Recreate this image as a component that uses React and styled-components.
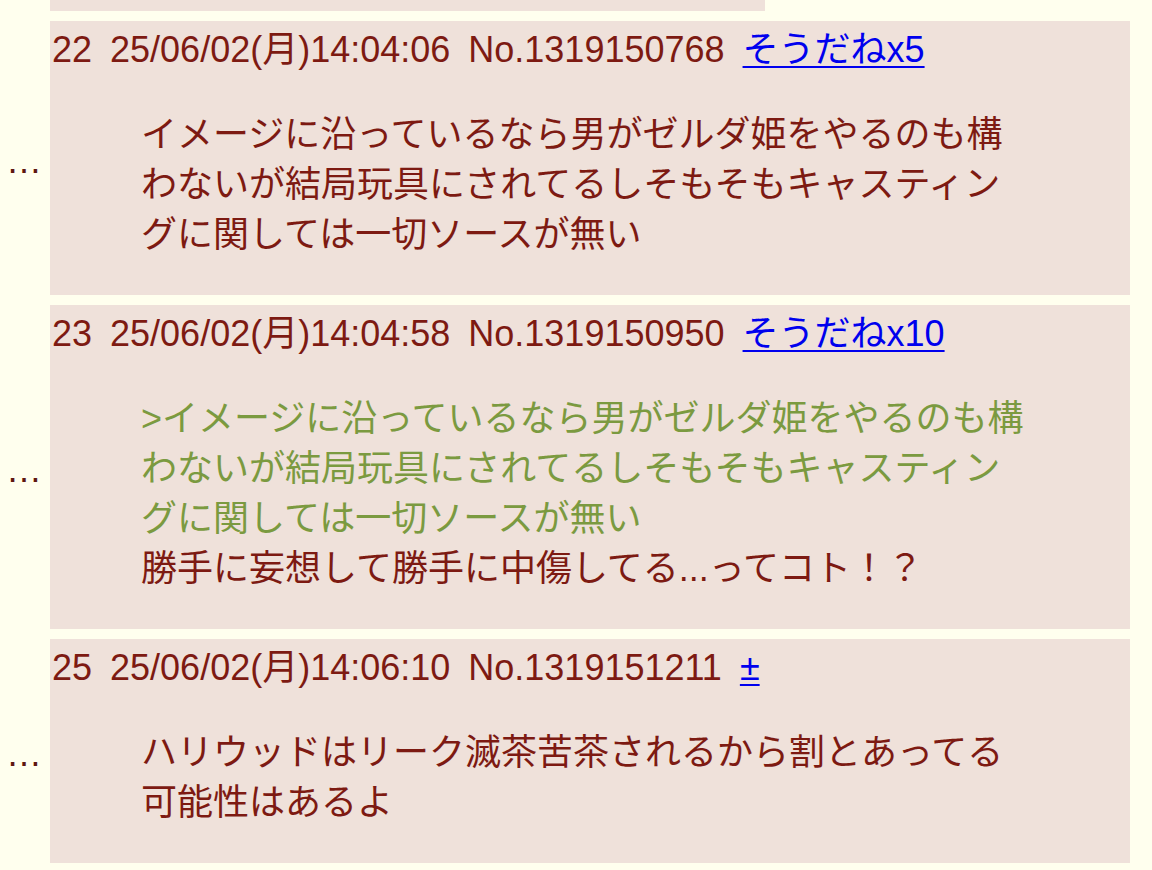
import React from 'react';
import styled, { createGlobalStyle } from 'styled-components';

const GlobalStyle = createGlobalStyle`
  body {
    margin: 0;
    background: #ffffee;
    font-family: "Liberation Sans", "Noto Sans CJK JP", sans-serif;
    color: #800000;
  }
`

const Thread = styled.div`
  display: flex;
  flex-direction: column;
  gap: 10px;
  width: 1152px;
`

const PrevTail = styled.div`
  margin-left: 50px;
  width: 715px;
  height: 11px;
  background: #efe1da;
`

const Row = styled.div`
  display: flex;
  align-items: center;
`

const Gutter = styled.div`
  width: 50px;
  flex: 0 0 50px;
  padding-left: 6px;
  box-sizing: border-box;
  font-size: 36px;
  line-height: 44px;
  color: #5e1710;
  margin-top: 6px;
`

const Post = styled.div`
  flex: 1;
  margin-right: 22px;
  background: #efe1da;
  padding: 7px 2px 35px;
`

const Header = styled.div`
  font-size: 36px;
  line-height: 44px;
  white-space: pre;
  word-spacing: -1px;
  color: #7d1a12;
`

const Sodane = styled.a`
  color: #0000ee;
  text-decoration: underline;
  text-decoration-thickness: 2px;
  text-underline-offset: 4px;
  cursor: pointer;
`

const Body = styled.blockquote`
  margin: 38px 0 0 89px;
  font-size: 36px;
  line-height: 50px;
  color: #7d1a12;
`

const Line = styled.div`
  white-space: nowrap;
  color: ${({ $quote }) => ($quote ? '#7b9a40' : 'inherit')};
`

const posts = [
  {
    num: '22',
    date: '25/06/02(月)14:04:06',
    no: 'No.1319150768',
    sodane: 'そうだねx5',
    lines: [
      { t: 'イメージに沿っているなら男がゼルダ姫をやるのも構' },
      { t: 'わないが結局玩具にされてるしそもそもキャスティン' },
      { t: 'グに関しては一切ソースが無い' },
    ],
  },
  {
    num: '23',
    date: '25/06/02(月)14:04:58',
    no: 'No.1319150950',
    sodane: 'そうだねx10',
    lines: [
      { t: '>イメージに沿っているなら男がゼルダ姫をやるのも構', q: true },
      { t: 'わないが結局玩具にされてるしそもそもキャスティン', q: true },
      { t: 'グに関しては一切ソースが無い', q: true },
      { t: '勝手に妄想して勝手に中傷してる...ってコト！？' },
    ],
  },
  {
    num: '25',
    date: '25/06/02(月)14:06:10',
    no: 'No.1319151211',
    sodane: '±',
    lines: [
      { t: 'ハリウッドはリーク滅茶苦茶されるから割とあってる' },
      { t: '可能性はあるよ' },
    ],
  },
];

const App = () => (
  <>
    <GlobalStyle />
    <Thread>
      <PrevTail />
      {posts.map((p) => (
        <Row key={p.no}>
          <Gutter>…</Gutter>
          <Post>
            <Header>
              {`${p.num}  ${p.date}  ${p.no}  `}
              <Sodane>{p.sodane}</Sodane>
            </Header>
            <Body>
              {p.lines.map((l, i) => (
                <Line key={i} $quote={l.q}>{l.t}</Line>
              ))}
            </Body>
          </Post>
        </Row>
      ))}
    </Thread>
  </>
);

export default App;
